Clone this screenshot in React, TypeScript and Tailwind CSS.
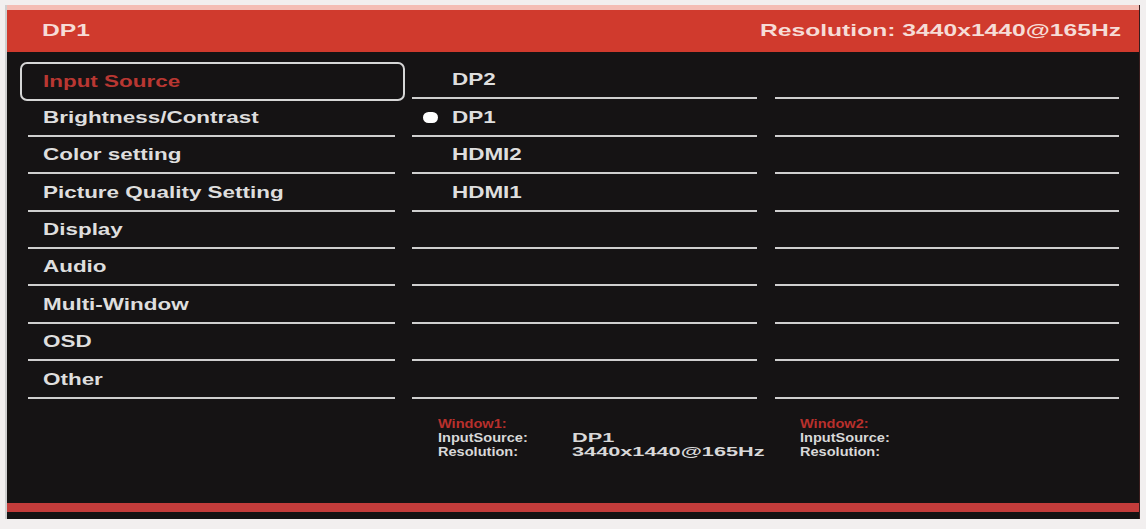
import React from 'react';

const menuItems = [
    'Input Source',
    'Brightness/Contrast',
    'Color setting',
    'Picture Quality Setting',
    'Display',
    'Audio',
    'Multi-Window',
    'OSD',
    'Other',
];

const sources = ['DP2', 'DP1', 'HDMI2', 'HDMI1', '', '', '', '', ''];

// The OSD font is much wider than anything installed, so stretch it
const Wide: React.FC<{ children: React.ReactNode; className?: string }> = ({ children, className }) => (
    <span className={`inline-block whitespace-nowrap ${className ?? ''}`}>{children}</span>
);

const App: React.FC = () => {
    return (
        <div className="h-[529px] w-full overflow-hidden bg-[#f2efef] pt-[5px] pl-[5px] pr-[6px] font-['Liberation_Sans',Arial,sans-serif]">
            <div className="flex h-[514px] flex-col border-l-2 border-r border-l-[#cfcfcf] border-r-[#3a1d1d] bg-[#151314]">
                {/* header */}
                <div className="flex h-[47px] items-center justify-between border-t-[5px] border-[#f4bdb5] bg-[#d03a2d] pl-[35px] pr-[18px] text-[17px] font-bold text-[#f6dcd6]">
                    <Wide className="origin-left scale-x-[1.45]">DP1</Wide>
                    <Wide className="origin-right scale-x-[1.45]">Resolution: 3440x1440@165Hz</Wide>
                </div>

                {/* menu rows */}
                <div className="mt-[10px] flex flex-col pl-[13px]">
                    {menuItems.map((item, i) => {
                        const selected = i === 0;
                        const src = sources[i];
                        return (
                            <div key={item} className="flex h-[37.4px]">
                                <div className="w-[385px]">
                                    {selected ? (
                                        <div className="flex h-[39px] items-center rounded-[7px] border-2 border-[#d6d6d6] pl-[21px] pt-[1px] text-[17px] font-bold text-[#b93732]">
                                            <Wide className="origin-left scale-x-[1.32]">{item}</Wide>
                                        </div>
                                    ) : (
                                        <div className="ml-[8px] mr-[10px] flex h-full items-center border-b-2 border-[#cfcfcf] pl-[15px] pt-[1px] text-[17px] font-bold text-[#dedede]">
                                            <Wide className="origin-left scale-x-[1.32]">{item}</Wide>
                                        </div>
                                    )}
                                </div>
                                <div className="ml-[7px] flex w-[345px] items-center border-b-2 border-[#cfcfcf] pl-[11px] pt-[1px] text-[17px] font-bold text-[#dedede]">
                                    <span className="flex w-[29px] items-center">
                                        {src === 'DP1' && <span className="h-[11px] w-[15px] rounded-full bg-white" />}
                                    </span>
                                    {src && <Wide className="origin-left scale-x-[1.32]">{src}</Wide>}
                                </div>
                                <div className="ml-[18px] w-[344px] border-b-2 border-[#cfcfcf]" />
                            </div>
                        );
                    })}
                </div>

                {/* window info */}
                <div className="mt-[18px] flex pl-[13px] text-[13px] font-bold leading-[14px] text-[#d8d8d8]">
                    <div className="w-[392px]" />
                    <div className="grid w-[345px] grid-cols-[134px_auto] pl-[26px]">
                        <Wide className="col-span-2 origin-left scale-x-[1.12] text-[#b8302c]">Window1:</Wide>
                        <Wide className="origin-left scale-x-[1.12]">InputSource:</Wide>
                        <Wide className="origin-left scale-x-[1.67]">DP1</Wide>
                        <Wide className="origin-left scale-x-[1.12]">Resolution:</Wide>
                        <Wide className="origin-left scale-x-[1.67]">3440x1440@165Hz</Wide>
                    </div>
                    <div className="ml-[18px] flex w-[344px] flex-col pl-[25px]">
                        <Wide className="origin-left scale-x-[1.12] text-[#b8302c]">Window2:</Wide>
                        <Wide className="origin-left scale-x-[1.12]">InputSource:</Wide>
                        <Wide className="origin-left scale-x-[1.12]">Resolution:</Wide>
                    </div>
                </div>

                {/* bottom bar */}
                <div className="mt-auto mb-[7px] h-[9px] bg-[#c33c3b]" />
            </div>
        </div>
    );
};

export default App;
